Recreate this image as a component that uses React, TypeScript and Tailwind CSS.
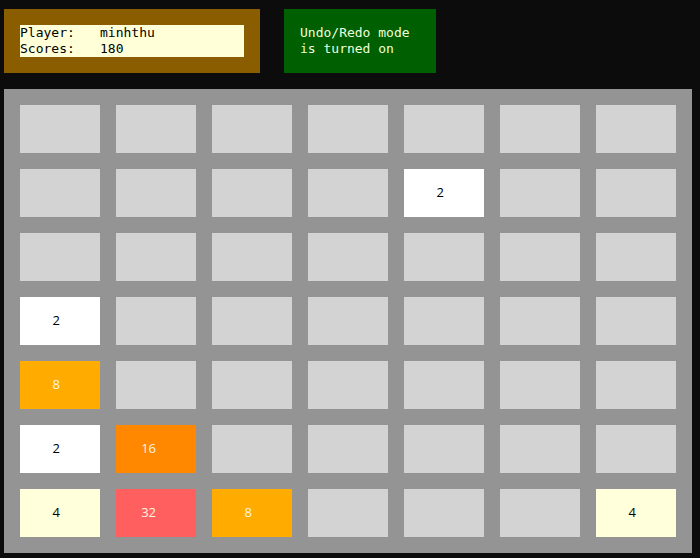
import React from 'react';

type Cell = number | null;

const board: Cell[][] = [
  [null, null, null, null, null, null, null],
  [null, null, null, null, 2, null, null],
  [null, null, null, null, null, null, null],
  [2, null, null, null, null, null, null],
  [8, null, null, null, null, null, null],
  [2, 16, null, null, null, null, null],
  [4, 32, 8, null, null, null, 4],
];

const tileStyle = (v: Cell) => {
  switch (v) {
    case 2:
      return 'bg-white text-black';
    case 4:
      return 'bg-[#ffffdc] text-black';
    case 8:
      return 'bg-[#ffab00] text-[#fff6e0]';
    case 16:
      return 'bg-[#ff8800] text-[#fff6e0]';
    case 32:
      return 'bg-[#ff5f5f] text-[#fff6e0]';
    default:
      return 'bg-[#d3d3d3]';
  }
};

const App = () => {
  return (
    <div className="w-[700px] h-[558px] bg-[#0c0c0c] overflow-hidden">
      <div className="flex gap-6 pt-[9px] pl-1">
        <div className="w-64 h-16 bg-[#8a5e00] p-4">
          <div className="w-56 h-8 bg-[#ffffd8] text-black font-['DejaVu_Sans_Mono',monospace] text-[13px] leading-4">
            <div className="flex">
              <span className="w-20">Player:</span>
              <span>minhthu</span>
            </div>
            <div className="flex">
              <span className="w-20">Scores:</span>
              <span>180</span>
            </div>
          </div>
        </div>
        <div className="w-[152px] h-16 bg-[#005f00] p-4 text-[#eeffdd] font-['DejaVu_Sans_Mono',monospace] text-[13px] leading-4">
          <div>Undo/Redo mode</div>
          <div>is turned on</div>
        </div>
      </div>

      <div className="mt-4 ml-1 w-[688px] h-[464px] bg-[#949494] p-4 grid grid-cols-7 gap-4">
        {board.flat().map((v, i) => (
          <div key={i} className={`w-20 h-12 flex items-center ${tileStyle(v)}`}>
            {v !== null && (
              <span className="w-10 text-right font-['Open_Sans',sans-serif] text-[13px]">{v}</span>
            )}
          </div>
        ))}
      </div>
    </div>
  );
};

export default App;
